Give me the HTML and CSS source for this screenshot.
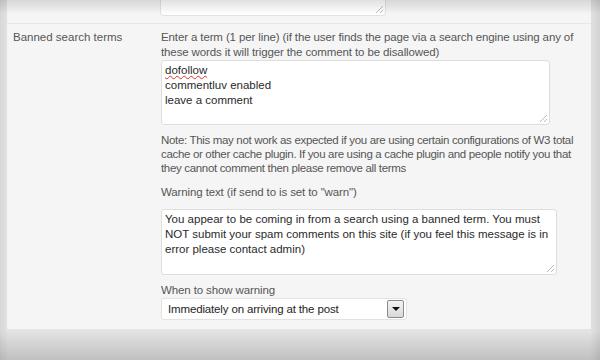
FILE: index.html
```html
<!DOCTYPE html>
<html lang="en">
<head>
  <meta charset="UTF-8">
  <title>Banned search terms</title>
  <link rel="stylesheet" href="styles.css">
</head>
<body>
  <div class="panel">
    <div class="prev-row">
      <div class="prev-field"><span class="grip"></span></div>
    </div>
    <div class="row">
      <div class="row-label">Banned search terms</div>
      <div class="row-field">
        <p class="desc">Enter a term (1 per line) (if the user finds the page via a search engine using any of<br>these words it will trigger the comment to be disallowed)</p>
        <div class="textarea terms">
          <span class="misspelt">dofollow</span><br>commentluv enabled<br>leave a comment
          <span class="grip"></span>
        </div>
        <p class="desc note">Note: This may not work as expected if you are using certain configurations of W3 total<br>cache or other cache plugin. If you are using a cache plugin and people notify you that<br>they cannot comment then please remove all terms</p>
        <p class="desc label">Warning text (if send to is set to "warn")</p>
        <div class="textarea warning">
          You appear to be coming in from a search using a banned term. You must<br>NOT submit your spam comments on this site (if you feel this message is in<br>error please contact admin)
          <span class="grip"></span>
        </div>
        <p class="desc label-sm">When to show warning</p>
        <div class="select">
          <span class="select-text">Immediately on arriving at the post</span>
          <span class="select-btn"><span class="caret"></span></span>
        </div>
      </div>
    </div>
  </div>
  <div class="vignette"></div>
</body>
</html>
```

FILE: styles.css
```css
html, body {
  height: 100%;
}
body {
  margin: 0;
  background: linear-gradient(to bottom, #e4e4e4 0, #e4e4e4 330px, #cdcdcd 360px);
  font-family: 'Liberation Sans', Arial, sans-serif;
  font-size: 11.5px;
  color: #333;
  overflow: hidden;
}
.panel {
  margin: 0 8px 0 6px;
  background-color: #f5f5f5;
  border: 1px solid #e3e3e3;
  border-top: none;
  height: 330px;
  box-sizing: border-box;
}
.prev-row {
  height: 23px;
  border-bottom: 1px solid #e6e6e6;
  padding-left: 153px;
}
.prev-field {
  position: relative;
  width: 224px;
  height: 15px;
  background: #fff;
  border: 1px solid #e2e2e2;
  border-top: none;
  border-radius: 0 0 4px 4px;
}
.row {
  display: flex;
  padding: 6px 0 0 6px;
}
.row-label {
  width: 148px;
  color: #555;
  line-height: 15px;
}
.row-field {
  flex: 1;
}
.desc {
  margin: 0;
  color: #555;
  line-height: 15px;
  white-space: nowrap;
  letter-spacing: -0.12px;
}
.textarea {
  position: relative;
  background: #fff;
  border: 1px solid #dedede;
  border-radius: 3px;
  padding: 2px 3px;
  line-height: 15px;
  color: #2a2a2a;
  box-sizing: border-box;
  white-space: nowrap;
}
.terms {
  width: 389px;
  height: 65px;
  margin: 0;
}
.misspelt {
  text-decoration: underline wavy #e03030;
  text-decoration-thickness: 1px;
}
.note {
  margin-top: 8px;
  line-height: 14px;
  letter-spacing: -0.33px;
}
.label {
  margin-top: 10px;
}
.warning {
  width: 396px;
  height: 66px;
  margin-top: 9px;
}
.label-sm {
  margin-top: 8px;
}
.grip {
  position: absolute;
  right: 2px;
  bottom: 2px;
  width: 7px;
  height: 7px;
  background: linear-gradient(135deg, transparent 45%, #bbb 45%, #bbb 55%, transparent 55%, transparent 75%, #bbb 75%, #bbb 85%, transparent 85%);
}
.select {
  display: flex;
  align-items: center;
  justify-content: space-between;
  width: 246px;
  height: 22px;
  padding: 0 2px 0 6px;
  box-sizing: border-box;
  background: #fff;
  border: 1px solid #e2e2e2;
  border-radius: 3px;
  color: #1e1e1e;
}
.select-text {
  letter-spacing: -0.15px;
}
.select-btn {
  display: flex;
  align-items: center;
  justify-content: center;
  width: 15px;
  height: 16px;
  background: linear-gradient(#f4f4f4, #d8d8d8);
  border: 1px solid #8a8a8a;
  border-radius: 2px;
}
.caret {
  width: 0;
  height: 0;
  border-left: 4px solid transparent;
  border-right: 4px solid transparent;
  border-top: 4px solid #111;
}
.vignette {
  position: fixed;
  inset: 0;
  pointer-events: none;
  background:
    linear-gradient(to bottom, rgba(0,0,0,0.12), rgba(0,0,0,0) 14px),
    linear-gradient(to top, rgba(0,0,0,0.06), rgba(0,0,0,0) 28px),
    linear-gradient(to right, rgba(0,0,0,0.06), rgba(0,0,0,0) 8px),
    linear-gradient(to left, rgba(0,0,0,0.08), rgba(0,0,0,0) 10px);
}
```
